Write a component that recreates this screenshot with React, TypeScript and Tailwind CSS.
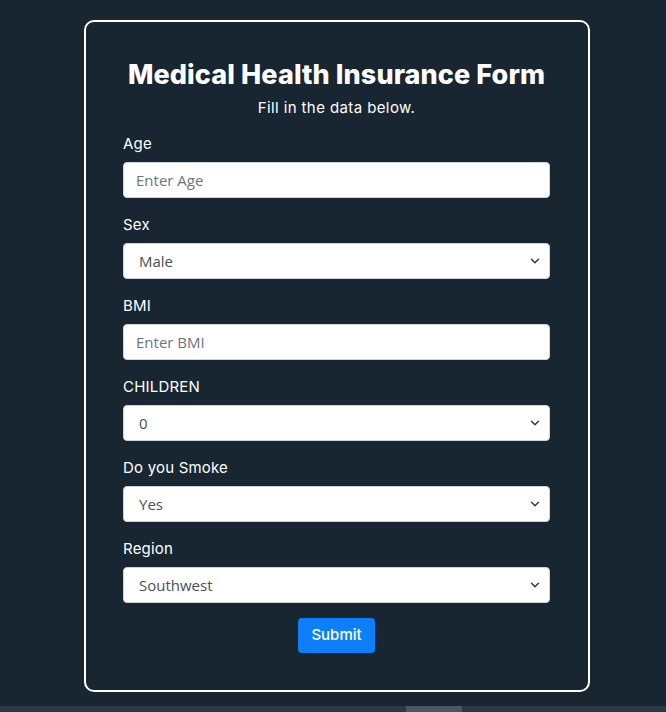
import { ChevronDown } from "lucide-react";

const fieldFont = { fontFamily: '"Open Sans", "Noto Sans", sans-serif' };

type Field =
  | { label: string; kind: "input"; placeholder: string }
  | { label: string; kind: "select"; value: string };

const fields: Field[] = [
  { label: "Age", kind: "input", placeholder: "Enter Age" },
  { label: "Sex", kind: "select", value: "Male" },
  { label: "BMI", kind: "input", placeholder: "Enter BMI" },
  { label: "CHILDREN", kind: "select", value: "0" },
  { label: "Do you Smoke", kind: "select", value: "Yes" },
  { label: "Region", kind: "select", value: "Southwest" },
];

function FormField({ field }: { field: Field }) {
  return (
    <div className="flex flex-col">
      <label className="mb-[9px] h-[18px] text-[15px] leading-[18px] tracking-[0.2px] text-white">
        {field.label}
      </label>
      {field.kind === "input" ? (
        <div
          className="flex h-[36px] items-center rounded-[4px] border border-[#ced4da] bg-white px-[12px] text-[15px] text-[#6c757d]"
          style={fieldFont}
        >
          {field.placeholder}
        </div>
      ) : (
        <div
          className="flex h-[36px] items-center justify-between rounded-[4px] border border-[#ced4da] bg-white pl-[15px] pr-[7px] text-[15px] text-[#495057]"
          style={fieldFont}
        >
          <span>{field.value}</span>
          <ChevronDown size={14} strokeWidth={2.5} className="text-[#343a40]" />
        </div>
      )}
    </div>
  );
}

export default function App() {
  return (
    <div className="relative h-[712px] w-[666px] overflow-hidden bg-[#172631] font-['Inter',sans-serif]">
      <div className="pl-[84px] pt-[20px]">
        <div className="flex w-[506px] flex-col rounded-[10px] border-2 border-white pb-[37px] pl-[37px] pr-[38px] pt-[35px]">
          <h1 className="whitespace-nowrap text-center text-[27px] font-extrabold leading-[36px] tracking-[0.1px] text-white">
            Medical Health Insurance Form
          </h1>
          <p className="mt-[4px] text-center text-[15px] leading-[22px] tracking-[0.4px] text-white">
            Fill in the data below.
          </p>
          <div className="mt-[16px] flex flex-col gap-[18px]">
            {fields.map((f) => (
              <FormField key={f.label} field={f} />
            ))}
          </div>
          <div className="mt-[15px] flex justify-center">
            <button
              type="button"
              className="h-[35px] w-[77px] rounded-[4px] bg-[#0d7ffb] text-[15px] font-medium text-white"
            >
              Submit
            </button>
          </div>
        </div>
      </div>
      <div className="absolute bottom-0 left-0 flex h-[6px] w-full bg-[#2a3944]">
        <div className="ml-[406px] h-full w-[56px] bg-[#4b5660]" />
      </div>
    </div>
  );
}
